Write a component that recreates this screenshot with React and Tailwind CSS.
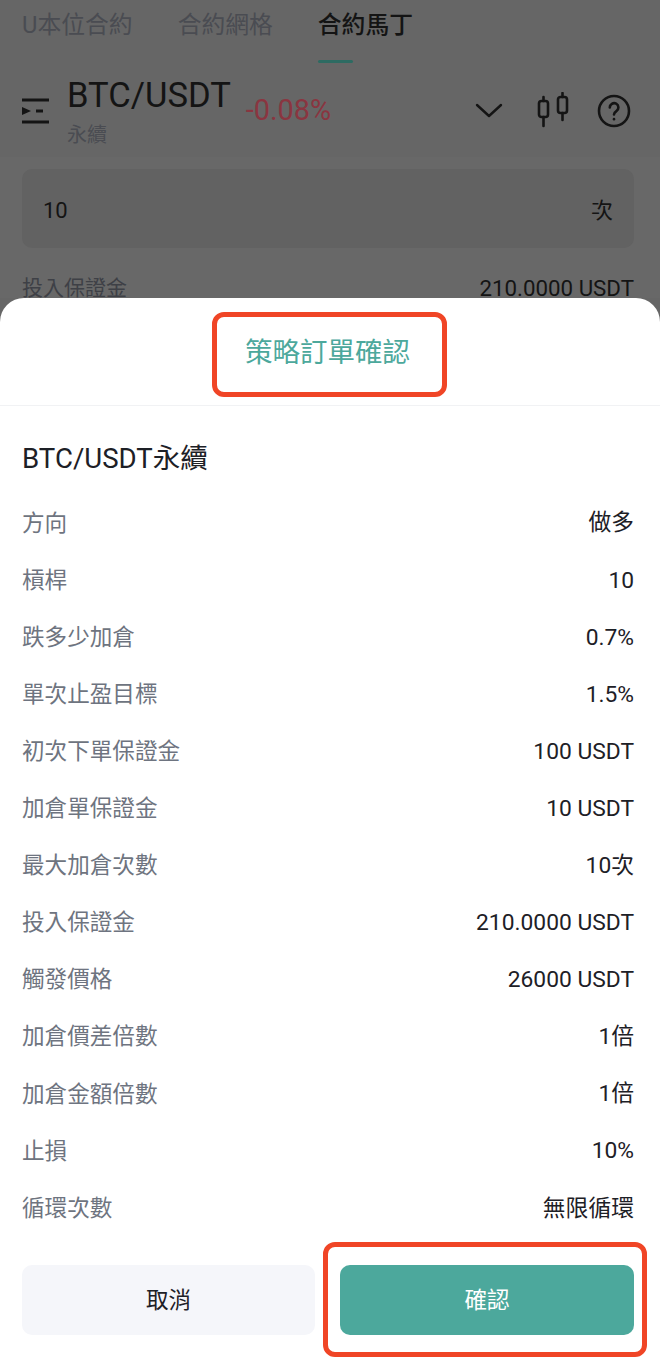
const fontStack = { fontFamily: 'Roboto, "Noto Sans CJK TC", sans-serif' }

const rows = [
  ['方向', '做多'],
  ['槓桿', '10'],
  ['跌多少加倉', '0.7%'],
  ['單次止盈目標', '1.5%'],
  ['初次下單保證金', '100 USDT'],
  ['加倉單保證金', '10 USDT'],
  ['最大加倉次數', '10次'],
  ['投入保證金', '210.0000 USDT'],
  ['觸發價格', '26000 USDT'],
  ['加倉價差倍數', '1倍'],
  ['加倉金額倍數', '1倍'],
  ['止損', '10%'],
  ['循環次數', '無限循環'],
]

const MenuIcon = () => (
  <svg width="28" height="28" viewBox="0 0 28 28" className="text-[#141414]">
    <path d="M0 3h27M0 25h27" stroke="currentColor" strokeWidth="3" />
    <path d="M0 10l9 4-9 4z" fill="currentColor" />
    <path d="M14 14h7" stroke="currentColor" strokeWidth="3" />
  </svg>
)

const ChevronIcon = () => (
  <svg width="28" height="16" viewBox="0 0 28 16" fill="none" stroke="#141414" strokeWidth="2.4" strokeLinecap="round" strokeLinejoin="round">
    <path d="M2 2l12 11L26 2" />
  </svg>
)

const CandleIcon = () => (
  <svg width="34" height="36" viewBox="0 0 34 36" fill="none" stroke="#141414" strokeWidth="2.6" strokeLinecap="round" strokeLinejoin="round">
    <rect x="2" y="9" width="9" height="16" rx="2.5" />
    <path d="M6.5 5v4M6.5 25v9" />
    <rect x="21" y="5" width="9" height="16" rx="2.5" />
    <path d="M25.5 1v4M25.5 21v7" />
  </svg>
)

const HelpIcon = () => (
  <svg width="34" height="34" viewBox="0 0 34 34" fill="none" stroke="#141414" strokeWidth="2.6" strokeLinecap="round" strokeLinejoin="round">
    <circle cx="17" cy="17" r="15" />
    <path d="M12.8 13.5a4.3 4.3 0 1 1 6.6 3.6c-1.5 1-2.4 1.7-2.4 3.4" />
    <path d="M17 25v.2" />
  </svg>
)

const BackgroundPage = () => (
  <div className="h-[298px] overflow-hidden bg-[#686868]">
    <div className="h-[157px] bg-[#666666]">
      <div className="flex h-[63px] gap-[45px] pl-[22px] text-[23.8px]">
        <div className="pt-[8px] text-[#4a4c52]">U本位合約</div>
        <div className="pt-[8px] text-[#4a4c52]">合約網格</div>
        <div className="relative pt-[8px] font-medium text-[#141414]">
          合約馬丁
          <div className="absolute bottom-0 left-0 h-[3px] w-[35px] rounded-sm bg-[#2d6b62]" />
        </div>
      </div>
      <div className="flex items-start pl-[22px] pr-[29px]">
        <div className="mt-[34px] mr-[17px]">
          <MenuIcon />
        </div>
        <div className="flex flex-col">
          <div className="mt-[12px] text-[34.6px] leading-[40px] text-[#141414]">BTC/USDT</div>
          <div className="mt-[6px] text-[20px] leading-[28px] text-[#4a4c52]">永續</div>
        </div>
        <div className="ml-[15px] mt-[30px] text-[28.8px] leading-[34px] text-[#8a3540]">-0.08%</div>
        <div className="ml-auto mt-[40px]">
          <ChevronIcon />
        </div>
        <div className="ml-[34px] mt-[29px]">
          <CandleIcon />
        </div>
        <div className="ml-[26px] mt-[31px]">
          <HelpIcon />
        </div>
      </div>
    </div>
    <div className="pl-[22px] pr-[26px] pt-[12px]">
      <div className="flex h-[79px] items-center justify-between rounded-[10px] bg-[#626262] pl-[21px] pr-[21px] pt-[3px] text-[22px] text-[#141414]">
        <span>10</span>
        <span>次</span>
      </div>
      <div className="mt-[25px] flex items-center justify-between leading-[30px]">
        <span className="text-[21px] text-[#3e4046]">投入保證金</span>
        <span className="text-[22.3px] text-[#141414]">210.0000 USDT</span>
      </div>
    </div>
  </div>
)

const App = () => {
  return (
    <div className="w-[660px] h-[1370px] overflow-hidden bg-[#666666]" style={fontStack}>
      <BackgroundPage />
      <div className="relative h-[1072px] rounded-t-[24px] bg-white">
        <div className="flex h-[108px] items-center justify-center border-b border-[#f1f2f4] pr-[5px] pt-[2px] text-[27.5px] text-[#4ca89c]">
          策略訂單確認
        </div>
        <div className="absolute left-[212px] top-[14px] h-[85px] w-[235px] rounded-[12px] border-[5px] border-[#f04526]" />

        <div className="px-[22px] pt-[35px] text-[27.6px] leading-[36px] text-[#1d2026]">BTC/USDT永續</div>

        <div className="mt-[18px] flex flex-col pl-[22px] pr-[26px]">
          {rows.map(([label, value]) => (
            <div key={label} className="flex h-[57.1px] items-center justify-between">
              <span className="text-[22.6px] text-[#6e7480]">{label}</span>
              <span className="text-[22.8px] text-[#1d2026]">{value}</span>
            </div>
          ))}
        </div>

        <div className="mt-[27.7px] flex gap-[25px] pl-[22px] pr-[26px] text-[22.5px]">
          <button className="h-[70px] w-[293px] rounded-[10px] bg-[#f5f6fa] pt-[2px] text-[#1d2026]">取消</button>
          <button className="h-[70px] w-[294px] rounded-[10px] bg-[#4ca89c] pt-[2px] text-white">確認</button>
        </div>
        <div className="absolute left-[323px] top-[944px] h-[115px] w-[324px] rounded-[12px] border-[5px] border-[#f04526]" />
      </div>
    </div>
  )
}

export default App
